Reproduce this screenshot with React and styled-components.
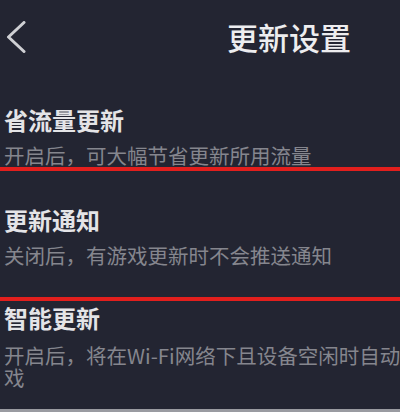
import React from 'react';
import styled, { createGlobalStyle } from 'styled-components';

const GlobalStyle = createGlobalStyle`
  html, body {
    margin: 0;
    padding: 0;
    background: #232532;
    overflow: hidden;
  }
  body {
    font-family: "Noto Sans CJK SC", "Noto Sans", sans-serif;
  }
`;

// the phone screen is wider than the photographed crop
const Screen = styled.div`
  width: 578px;
  height: 412px;
  background: #232532;
  display: flex;
  flex-direction: column;
`;

const Header = styled.header`
  height: 74px;
  display: grid;
  grid-template-columns: 1fr auto 1fr;
  align-items: center;
  padding: 0 6px;
`;

const BackButton = styled.button`
  justify-self: start;
  background: none;
  border: 0;
  padding: 0;
  width: 20px;
  height: 32px;
  display: flex;
`;

const Title = styled.h1`
  margin: 0;
  font-size: 31px;
  line-height: 36px;
  font-weight: 500;
  color: #ededef;
`;

const List = styled.div`
  flex: 1;
  display: flex;
  flex-direction: column;
  padding-top: 32px;
`;

const Item = styled.div`
  display: flex;
  align-items: center;
  padding-left: 4px;
`;

const Texts = styled.div`
  width: 460px;
  display: flex;
  flex-direction: column;
  gap: ${p => p.$gap || 10}px;
`;

const ItemTitle = styled.div`
  font-size: 24px;
  line-height: 28px;
  font-weight: 700;
  color: #e4e4e7;
`;

const ItemDesc = styled.div`
  font-size: 20.5px;
  line-height: 22px;
  color: #85868e;
`;

const Switch = styled.span`
  margin-left: auto;
  margin-right: 20px;
  width: 50px;
  height: 28px;
  border-radius: 14px;
  background: ${p => (p.$on ? '#3a7afe' : '#4a4c58')};
`;

// red marking lines drawn over the screenshot
const Mark = styled.div`
  height: 4px;
  background: #e21f1d;
  margin-top: ${p => p.$top}px;
  margin-bottom: ${p => p.$bottom}px;
`;

const BottomEdge = styled.div`
  margin-top: auto;
  height: 3px;
  background: #9a9ba1;
`;

const Chevron = () => (
  <svg width="20" height="32" viewBox="0 0 20 32">
    <polyline points="18,1.5 2.5,16 18,30.5" fill="none" stroke="#cfd0d4" strokeWidth="3" strokeLinecap="round" strokeLinejoin="round" />
  </svg>
);

const items = [
  { title: '省流量更新', desc: '开启后，可大幅节省更新所用流量', on: true },
  { title: '更新通知', desc: '关闭后，有游戏更新时不会推送通知', on: false },
  { title: '智能更新', desc: '开启后，将在Wi-Fi网络下且设备空闲时自动更新游戏', on: true },
];

const Row = ({ item, gap }) => (
  <Item>
    <Texts $gap={gap}>
      <ItemTitle>{item.title}</ItemTitle>
      <ItemDesc>{item.desc}</ItemDesc>
    </Texts>
    <Switch $on={item.on} />
  </Item>
);

export default function App() {
  return (
    <>
      <GlobalStyle />
      <Screen>
        <Header>
          <BackButton aria-label="返回">
            <Chevron />
          </BackButton>
          <Title>更新设置</Title>
          <span />
        </Header>
        <List>
          <Row item={items[0]} />
          <Mark $top={1} $bottom={35} />
          <Row item={items[1]} />
          <Mark $top={31} $bottom={3} />
          <Row item={items[2]} gap={12} />
          <BottomEdge />
        </List>
      </Screen>
    </>
  );
}
